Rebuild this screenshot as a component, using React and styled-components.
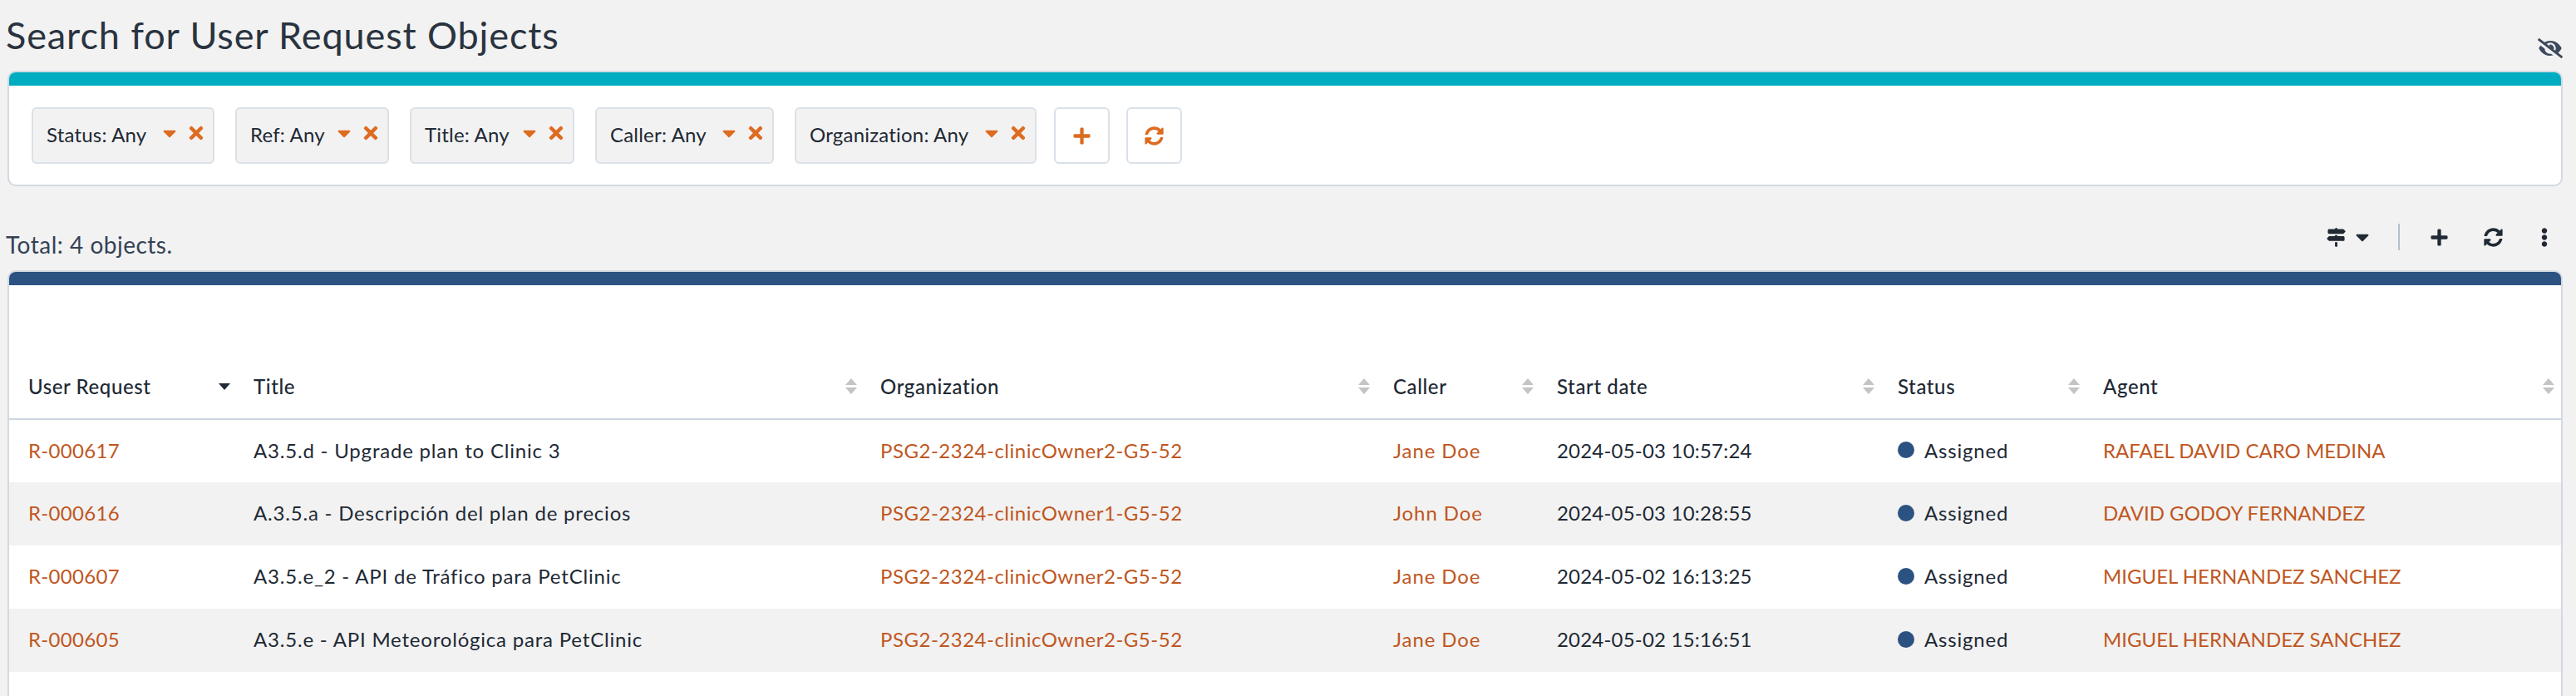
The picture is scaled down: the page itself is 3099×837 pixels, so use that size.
import React from 'react';
import styled, { createGlobalStyle } from 'styled-components';
import { FaPlus, FaSyncAlt, FaTimes, FaEllipsisV, FaEyeSlash, FaCaretDown } from 'react-icons/fa';
import { FaSignsPost } from 'react-icons/fa6';

const GlobalStyle = createGlobalStyle`
  html, body {
    margin: 0;
    height: 100%;
    overflow: hidden;
    background: #f2f2f2;
  }
  body {
    font-family: Lato, "Open Sans", "Liberation Sans", sans-serif;
    color: #212934;
  }
`;

const Page = styled.div`
  padding: 0 16px 0 9px;
`;

const TitleBar = styled.header`
  height: 85px;
  display: flex;
  justify-content: space-between;
  align-items: flex-end;
`;

const Title = styled.h1`
  margin: 0 0 17px -2px;
  font-size: 45px;
  line-height: 52px;
  font-weight: 400;
  letter-spacing: 0.9px;
  color: #2a3340;
`;

const EyeIcon = styled(FaEyeSlash)`
  width: 30px;
  height: 24px;
  margin-bottom: 15px;
  color: #3c4a5c;
`;

const Panel = styled.section`
  border: 2px solid #d2d9e1;
  border-radius: 10px;
  background: #fff;
  overflow: hidden;
  ${(p) => p.$open && 'border-bottom: 0; border-radius: 10px 10px 0 0;'}
`;

const Strip = styled.div`
  height: 16px;
  background: ${(p) => p.$color};
`;

const FilterRow = styled.div`
  display: flex;
  align-items: stretch;
  padding: 26px 27px 25px;
`;

const Chip = styled.div`
  box-sizing: border-box;
  width: ${(p) => p.$width}px;
  height: 68px;
  margin-right: 25px;
  padding: 0 10px 3px 16px;
  display: flex;
  align-items: center;
  background: #f2f2f2;
  border: 2px solid #dae1e8;
  border-radius: 6px;
  font-size: 24px;
  letter-spacing: 0.2px;
`;

const ChipLabel = styled.span`
  flex: 1;
  white-space: nowrap;
`;

const ChipCaret = styled(FaCaretDown)`
  width: 16px;
  height: 26px;
  margin-right: 14px;
  margin-top: -3px;
  color: #dd6b20;
`;

const ChipClose = styled(FaTimes)`
  width: 20px;
  height: 24px;
  margin-top: -3px;
  color: #dd6b20;
`;

const SquareButton = styled.button`
  box-sizing: border-box;
  width: 67px;
  height: 68px;
  margin-right: 20px;
  margin-left: ${(p) => p.$shift || 0}px;
  padding: 0;
  display: flex;
  align-items: center;
  justify-content: center;
  background: #fff;
  border: 2px solid #dae1e8;
  border-radius: 6px;
  color: #dd6b20;
  font-size: 23px;
`;

const ListBar = styled.div`
  height: 101px;
  box-sizing: border-box;
  display: flex;
  align-items: flex-end;
  justify-content: space-between;
`;

const Total = styled.div`
  font-size: 28px;
  line-height: 34px;
  margin: 0 0 14px -2px;
  letter-spacing: 0.5px;
  color: #344256;
`;

const Toolbar = styled.div`
  display: flex;
  align-items: center;
  height: 44px;
  margin-bottom: 18px;
  color: #212934;
`;

const ToolButton = styled.span`
  display: flex;
  align-items: center;
  justify-content: center;
  width: ${(p) => p.$width}px;
  margin-left: ${(p) => p.$gap || 0}px;
  font-size: ${(p) => p.$size || 23}px;
`;

const ToolDivider = styled.span`
  width: 2px;
  height: 32px;
  margin: 0 37px 0 35px;
  background: #b4c0cd;
`;

const TableWrap = styled.div`
  padding-top: 83px;
  padding-bottom: 30px;
`;

const Table = styled.table`
  width: 100%;
  table-layout: fixed;
  border-collapse: collapse;
  font-size: 24px;
`;

const HeadCell = styled.th`
  position: relative;
  height: 77px;
  padding: 0 20px;
  text-align: left;
  font-weight: 500;
  letter-spacing: 0.6px;
  border-bottom: 2px solid #cbd5e0;
  color: #212934;
  &:first-child {
    padding-left: 23px;
  }
`;

const SortMark = styled.svg`
  position: absolute;
  right: 8px;
  top: 29px;
  width: 14px;
  height: 19px;
`;

const Row = styled.tr`
  background: ${(p) => (p.$striped ? '#f2f2f2' : '#fff')};
`;

const Cell = styled.td`
  box-sizing: border-box;
  height: 76px;
  padding: 0 20px 3px;
  white-space: nowrap;
  letter-spacing: ${(p) => p.$spacing || 0}px;
  &:first-child {
    padding-left: 23px;
  }
`;

const Link = styled.a`
  color: #c05621;
  text-decoration: none;
`;

const StatusWrap = styled.span`
  display: flex;
  align-items: center;
  gap: 12px;
`;

const StatusDot = styled.span`
  width: 20px;
  height: 20px;
  border-radius: 50%;
  background: #2c5282;
`;

const filters = [
  { label: 'Status: Any', width: 220 },
  { label: 'Ref: Any', width: 185 },
  { label: 'Title: Any', width: 198 },
  { label: 'Caller: Any', width: 215 },
  { label: 'Organization: Any', width: 291 },
];

const columns = [
  { name: 'User Request', width: 274, sorted: true },
  { name: 'Title', width: 754 },
  { name: 'Organization', width: 617 },
  { name: 'Caller', width: 197 },
  { name: 'Start date', width: 410 },
  { name: 'Status', width: 247 },
  { name: 'Agent', width: 571 },
];

const rows = [
  ['R-000617', 'A3.5.d - Upgrade plan to Clinic 3', 'PSG2-2324-clinicOwner2-G5-52', 'Jane Doe', '2024-05-03 10:57:24', 'RAFAEL DAVID CARO MEDINA'],
  ['R-000616', 'A.3.5.a - Descripción del plan de precios', 'PSG2-2324-clinicOwner1-G5-52', 'John Doe', '2024-05-03 10:28:55', 'DAVID GODOY FERNANDEZ'],
  ['R-000607', 'A3.5.e_2 - API de Tráfico para PetClinic', 'PSG2-2324-clinicOwner2-G5-52', 'Jane Doe', '2024-05-02 16:13:25', 'MIGUEL HERNANDEZ SANCHEZ'],
  ['R-000605', 'A3.5.e - API Meteorológica para PetClinic', 'PSG2-2324-clinicOwner2-G5-52', 'Jane Doe', '2024-05-02 15:16:51', 'MIGUEL HERNANDEZ SANCHEZ'],
];

const SortIcon = ({ sorted }) => (
  <SortMark viewBox="0 0 14 19">
    {sorted ? (
      <path d="M0 6h14l-7 8z" fill="#212934" />
    ) : (
      <g fill="#c4c4c4">
        <path d="M7 0l7 8H0z" />
        <path d="M0 11h14l-7 8z" />
      </g>
    )}
  </SortMark>
);

const App = () => (
  <Page>
    <GlobalStyle />
    <TitleBar>
      <Title>Search for User Request Objects</Title>
      <EyeIcon />
    </TitleBar>

    <Panel>
      <Strip $color="#00acc1" />
      <FilterRow>
        {filters.map((f) => (
          <Chip key={f.label} $width={f.width}>
            <ChipLabel>{f.label}</ChipLabel>
            <ChipCaret />
            <ChipClose />
          </Chip>
        ))}
        <SquareButton $shift={-4}><FaPlus /></SquareButton>
        <SquareButton><FaSyncAlt /></SquareButton>
      </FilterRow>
    </Panel>

    <ListBar>
      <Total>Total: 4 objects.</Total>
      <Toolbar>
        <ToolButton $width={24}><FaSignsPost /></ToolButton>
        <ToolButton $width={16} $gap={12} $size={26}><FaCaretDown /></ToolButton>
        <ToolDivider />
        <ToolButton $width={21}><FaPlus /></ToolButton>
        <ToolButton $width={23} $gap={43}><FaSyncAlt /></ToolButton>
        <ToolButton $width={10} $gap={45}><FaEllipsisV /></ToolButton>
        <ToolButton $width={17} />
      </Toolbar>
    </ListBar>

    <Panel $open>
      <Strip $color="#2c5282" />
      <TableWrap>
        <Table>
          <colgroup>
            {columns.map((c) => <col key={c.name} width={c.width} />)}
          </colgroup>
          <thead>
            <tr>
              {columns.map((c) => (
                <HeadCell key={c.name}>
                  {c.name}
                  <SortIcon sorted={c.sorted} />
                </HeadCell>
              ))}
            </tr>
          </thead>
          <tbody>
            {rows.map((r, i) => (
              <Row key={r[0]} $striped={i % 2 === 1}>
                <Cell $spacing={0.3}><Link>{r[0]}</Link></Cell>
                <Cell $spacing={0.8}>{r[1]}</Cell>
                <Cell $spacing={0.5}><Link>{r[2]}</Link></Cell>
                <Cell $spacing={0.9}><Link>{r[3]}</Link></Cell>
                <Cell $spacing={0.2}>{r[4]}</Cell>
                <Cell $spacing={0.8}>
                  <StatusWrap><StatusDot />Assigned</StatusWrap>
                </Cell>
                <Cell><Link>{r[5]}</Link></Cell>
              </Row>
            ))}
          </tbody>
        </Table>
      </TableWrap>
    </Panel>
  </Page>
);

export default App;
